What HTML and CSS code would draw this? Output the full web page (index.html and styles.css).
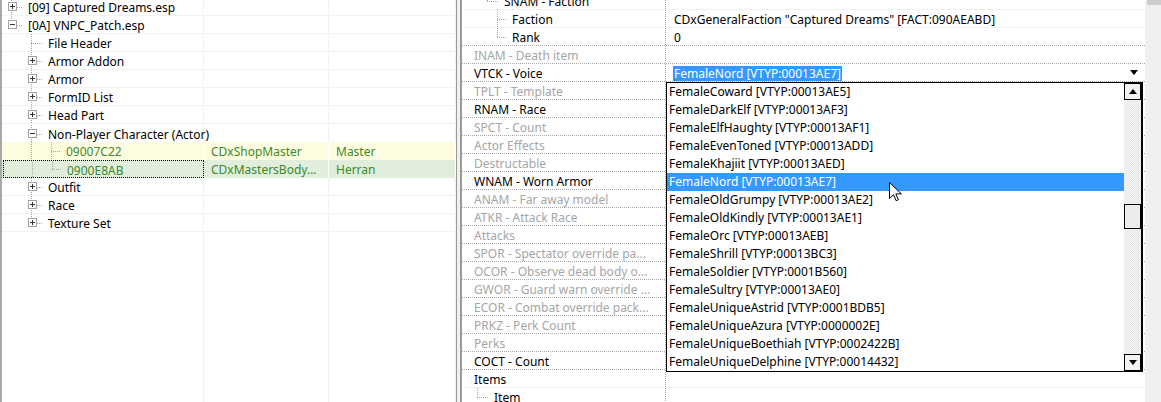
FILE: index.html
```html
<!DOCTYPE html>
<html lang="ja">
<head>
    <meta charset="UTF-8">
    <title>VNPC_Patch.esp</title>
    <link rel="stylesheet" href="styles.css">
</head>
<body>
<div class="app">
    <section class="tree-pane">
        <div class="tree">
            <div class="trow">
                <div class="c1"><span class="cn t"><svg class="box" width="9" height="9"><rect x=".5" y=".5" width="8" height="8" fill="#fff" stroke="#a3a3a3"/><path d="M2 4.5h5M4.5 2v5" stroke="#333"/></svg></span><span class="lbl">[09] Captured Dreams.esp</span></div>
                <div class="c2"></div><div class="c3"></div>
            </div>
            <div class="trow">
                <div class="c1"><span class="cn l"><svg class="box" width="9" height="9"><rect x=".5" y=".5" width="8" height="8" fill="#fff" stroke="#a3a3a3"/><path d="M2 4.5h5" stroke="#333"/></svg></span><span class="lbl">[0A] VNPC_Patch.esp</span></div>
                <div class="c2"></div><div class="c3"></div>
            </div>
            <div class="trow">
                <div class="c1"><span class="cn"></span><span class="cn t"></span><span class="lbl">File Header</span></div>
                <div class="c2"></div><div class="c3"></div>
            </div>
            <div class="trow">
                <div class="c1"><span class="cn"></span><span class="cn t"><svg class="box" width="9" height="9"><rect x=".5" y=".5" width="8" height="8" fill="#fff" stroke="#a3a3a3"/><path d="M2 4.5h5M4.5 2v5" stroke="#333"/></svg></span><span class="lbl">Armor Addon</span></div>
                <div class="c2"></div><div class="c3"></div>
            </div>
            <div class="trow">
                <div class="c1"><span class="cn"></span><span class="cn t"><svg class="box" width="9" height="9"><rect x=".5" y=".5" width="8" height="8" fill="#fff" stroke="#a3a3a3"/><path d="M2 4.5h5M4.5 2v5" stroke="#333"/></svg></span><span class="lbl">Armor</span></div>
                <div class="c2"></div><div class="c3"></div>
            </div>
            <div class="trow">
                <div class="c1"><span class="cn"></span><span class="cn t"><svg class="box" width="9" height="9"><rect x=".5" y=".5" width="8" height="8" fill="#fff" stroke="#a3a3a3"/><path d="M2 4.5h5M4.5 2v5" stroke="#333"/></svg></span><span class="lbl">FormID List</span></div>
                <div class="c2"></div><div class="c3"></div>
            </div>
            <div class="trow">
                <div class="c1"><span class="cn"></span><span class="cn t"><svg class="box" width="9" height="9"><rect x=".5" y=".5" width="8" height="8" fill="#fff" stroke="#a3a3a3"/><path d="M2 4.5h5M4.5 2v5" stroke="#333"/></svg></span><span class="lbl">Head Part</span></div>
                <div class="c2"></div><div class="c3"></div>
            </div>
            <div class="trow spill">
                <div class="c1"><span class="cn"></span><span class="cn t"><svg class="box" width="9" height="9"><rect x=".5" y=".5" width="8" height="8" fill="#fff" stroke="#a3a3a3"/><path d="M2 4.5h5" stroke="#333"/></svg></span><span class="lbl">Non-Player Character (Actor)</span></div>
                <div class="c2"></div><div class="c3"></div>
            </div>
            <div class="trow rec master">
                <div class="c1"><span class="cn"></span><span class="cn v"></span><span class="cn t short"></span><span class="lbl">09007C22</span></div>
                <div class="c2"><span class="lbl">CDxShopMaster</span></div><div class="c3"><span class="lbl">Master</span></div>
            </div>
            <div class="trow rec override">
                <div class="c1 focus"><span class="cn"></span><span class="cn v"></span><span class="cn l short"></span><span class="lbl">0900E8AB</span></div>
                <div class="c2"><span class="lbl">CDxMastersBody...</span></div><div class="c3"><span class="lbl">Herran</span></div>
            </div>
            <div class="trow">
                <div class="c1"><span class="cn"></span><span class="cn t"><svg class="box" width="9" height="9"><rect x=".5" y=".5" width="8" height="8" fill="#fff" stroke="#a3a3a3"/><path d="M2 4.5h5M4.5 2v5" stroke="#333"/></svg></span><span class="lbl">Outfit</span></div>
                <div class="c2"></div><div class="c3"></div>
            </div>
            <div class="trow">
                <div class="c1"><span class="cn"></span><span class="cn t"><svg class="box" width="9" height="9"><rect x=".5" y=".5" width="8" height="8" fill="#fff" stroke="#a3a3a3"/><path d="M2 4.5h5M4.5 2v5" stroke="#333"/></svg></span><span class="lbl">Race</span></div>
                <div class="c2"></div><div class="c3"></div>
            </div>
            <div class="trow">
                <div class="c1"><span class="cn"></span><span class="cn l"><svg class="box" width="9" height="9"><rect x=".5" y=".5" width="8" height="8" fill="#fff" stroke="#a3a3a3"/><path d="M2 4.5h5M4.5 2v5" stroke="#333"/></svg></span><span class="lbl">Texture Set</span></div>
                <div class="c2"></div><div class="c3"></div>
            </div>
            <div class="trow filler">
                <div class="c1"></div><div class="c2"></div><div class="c3"></div>
            </div>
        </div>
    </section>

    <div class="splitter"></div>

    <section class="props-pane">
        <div class="props">
            <div class="prow soft"><div class="pname"><span class="cn half"></span><span class="cn l"></span><span class="nm">SNAM - Faction</span></div><div class="pval"></div></div>
            <div class="prow soft"><div class="pname"><span class="cn half"></span><span class="cn half"></span><span class="cn t short"></span><span class="nm">Faction</span></div><div class="pval">CDxGeneralFaction "Captured Dreams" [FACT:090AEABD]</div></div>
            <div class="prow"><div class="pname"><span class="cn half"></span><span class="cn half"></span><span class="cn l short"></span><span class="nm">Rank</span></div><div class="pval">0</div></div>
            <div class="prow off"><div class="pname"><span class="nm">INAM - Death item</span></div><div class="pval"></div></div>
            <div class="prow"><div class="pname"><span class="nm">VTCK - Voice</span></div>
                <div class="pval combo"><span class="picked">FemaleNord [VTYP:00013AE7]</span><span class="arrow"></span></div>
            </div>
            <div class="prow off"><div class="pname"><span class="nm">TPLT - Template</span></div><div class="pval"></div></div>
            <div class="prow"><div class="pname"><span class="nm">RNAM - Race</span></div><div class="pval"></div></div>
            <div class="prow off"><div class="pname"><span class="nm">SPCT - Count</span></div><div class="pval"></div></div>
            <div class="prow off"><div class="pname"><span class="nm">Actor Effects</span></div><div class="pval"></div></div>
            <div class="prow off"><div class="pname"><span class="nm">Destructable</span></div><div class="pval"></div></div>
            <div class="prow"><div class="pname"><span class="nm">WNAM - Worn Armor</span></div><div class="pval"></div></div>
            <div class="prow off"><div class="pname"><span class="nm">ANAM - Far away model</span></div><div class="pval"></div></div>
            <div class="prow off"><div class="pname"><span class="nm">ATKR - Attack Race</span></div><div class="pval"></div></div>
            <div class="prow off"><div class="pname"><span class="nm">Attacks</span></div><div class="pval"></div></div>
            <div class="prow off"><div class="pname"><span class="nm">SPOR - Spectator override pa...</span></div><div class="pval"></div></div>
            <div class="prow off"><div class="pname"><span class="nm">OCOR - Observe dead body o...</span></div><div class="pval"></div></div>
            <div class="prow off"><div class="pname"><span class="nm">GWOR - Guard warn override ...</span></div><div class="pval"></div></div>
            <div class="prow off"><div class="pname"><span class="nm">ECOR - Combat override pack...</span></div><div class="pval"></div></div>
            <div class="prow off"><div class="pname"><span class="nm">PRKZ - Perk Count</span></div><div class="pval"></div></div>
            <div class="prow off"><div class="pname"><span class="nm">Perks</span></div><div class="pval"></div></div>
            <div class="prow"><div class="pname"><span class="nm">COCT - Count</span></div><div class="pval"></div></div>
            <div class="prow soft"><div class="pname"><span class="nm">Items</span></div><div class="pval"></div></div>
            <div class="prow soft"><div class="pname"><span class="cn l"></span><span class="nm">Item</span></div><div class="pval"></div></div>
        </div>
        <div class="pane-scroll"><div class="pane-thumb"></div></div>

        <div class="droplist">
            <ul class="items">
                <li>FemaleCoward [VTYP:00013AE5]</li>
                <li>FemaleDarkElf [VTYP:00013AF3]</li>
                <li>FemaleElfHaughty [VTYP:00013AF1]</li>
                <li>FemaleEvenToned [VTYP:00013ADD]</li>
                <li>FemaleKhajiit [VTYP:00013AED]</li>
                <li class="hot">FemaleNord [VTYP:00013AE7]</li>
                <li>FemaleOldGrumpy [VTYP:00013AE2]</li>
                <li>FemaleOldKindly [VTYP:00013AE1]</li>
                <li>FemaleOrc [VTYP:00013AEB]</li>
                <li>FemaleShrill [VTYP:00013BC3]</li>
                <li>FemaleSoldier [VTYP:0001B560]</li>
                <li>FemaleSultry [VTYP:00013AE0]</li>
                <li>FemaleUniqueAstrid [VTYP:0001BDB5]</li>
                <li>FemaleUniqueAzura [VTYP:0000002E]</li>
                <li>FemaleUniqueBoethiah [VTYP:0002422B]</li>
                <li>FemaleUniqueDelphine [VTYP:00014432]</li>
            </ul>
            <div class="vscroll">
                <div class="sbtn up"><span class="tri-up"></span></div>
                <div class="track t1"></div>
                <div class="thumb"></div>
                <div class="track t2"></div>
                <div class="sbtn down"><span class="tri-down"></span></div>
            </div>
        </div>

        <svg class="cursor" width="13" height="20" viewBox="0 0 13 20">
            <path d="M.5.5v16l4-3.8 2.6 6 2.3-1-2.6-5.8h5.6z" fill="#fff" stroke="#000" stroke-linejoin="round"/>
        </svg>
    </section>
</div>
</body>
</html>
```

FILE: styles.css
```css
* {
    box-sizing: border-box;
}

body {
    margin: 0;
    width: 1161px;
    height: 402px;
    overflow: hidden;
    background: #fff;
    font-family: "Noto Sans", "Noto Sans CJK JP", sans-serif;
    font-size: 12px;
    color: #000;
}

.app {
    display: flex;
    height: 402px;
}

/* left: record tree */

.tree-pane {
    width: 457px;
    height: 100%;
    border-left: 2px solid #a9a9a9;
    border-right: 1px solid #9a9a9a;
    overflow: hidden;
}

.tree {
    display: flex;
    flex-direction: column;
    height: calc(100% + 2px);
    margin-top: -2px;
}

.trow {
    display: grid;
    grid-template-columns: 202px 125px 1fr;
    height: 18px;
    line-height: 17px;
    white-space: nowrap;
}

.trow > div {
    display: flex;
    align-items: center;
    border-right: 1px solid #f2f2f2;
    border-bottom: 1px solid #f2f2f2;
    overflow: hidden;
}

.trow.spill .c1 {
    overflow: visible;
}

.trow .c2,
.trow .c3 {
    padding-left: 7px;
}

.trow .c2 .lbl,
.trow .c3 .lbl {
    padding-left: 0;
}

.trow.filler {
    flex: 1;
    height: auto;
}

.trow.filler > div {
    border-bottom: none;
}

.lbl {
    padding-left: 6px;
    padding-top: 2px;
}

.rec {
    color: #3d8a2c;
}

.rec.master {
    background: #fdfce0;
}

.rec.override {
    background: #e0eedb;
}

.rec > div {
    border-bottom-color: transparent;
    border-right-color: #fff;
}

.trow .c1.focus {
    border: 1px dotted #000;
    margin-left: 1px;
}

.focus .cn:first-child {
    width: 19px;
}

/* tree connector cells */

.cn {
    flex: none;
    display: inline-flex;
    align-items: center;
    justify-content: center;
    width: 20px;
    height: 18px;
}

.cn.v {
    background: repeating-linear-gradient(#a6a6a6 0 1px, transparent 1px 2px) 9px 0 / 1px 18px no-repeat;
}

.cn.t {
    background:
        repeating-linear-gradient(#a6a6a6 0 1px, transparent 1px 2px) 9px 0 / 1px 18px no-repeat,
        repeating-linear-gradient(90deg, #a6a6a6 0 1px, transparent 1px 2px) 9px 9px / 11px 1px no-repeat;
}

.cn.l {
    background:
        repeating-linear-gradient(#a6a6a6 0 1px, transparent 1px 2px) 9px 0 / 1px 9px no-repeat,
        repeating-linear-gradient(90deg, #a6a6a6 0 1px, transparent 1px 2px) 9px 9px / 11px 1px no-repeat;
}

.cn.short {
    width: 18px;
}

.cn.half {
    width: 10px;
}

.box {
    display: block;
}

/* splitter */

.splitter {
    width: 3px;
    background: #f0f0f0;
}

/* right: record properties */

.props-pane {
    position: relative;
    flex: 1;
    height: 100%;
    border-left: 2px solid #9a9a9a;
    display: flex;
    overflow: hidden;
}

.props {
    display: flex;
    flex-direction: column;
    margin-top: -8px;
    width: 683px;
}

.prow {
    display: grid;
    grid-template-columns: 204px 1fr;
    height: 18px;
    line-height: 17px;
    white-space: nowrap;
    border-bottom: 1px dotted #a8a8a8;
}

.prow.soft {
    border-bottom: 1px solid #f0f0f0;
}

.prow.off .pname {
    color: #a6a6a6;
}

.pname {
    display: flex;
    align-items: center;
    padding-left: 12px;
    border-right: 1px dotted #a8a8a8;
    overflow: hidden;
}

.nm {
    padding-top: 2px;
}

.pname .cn.l,
.pname .cn.t {
    margin-right: 6px;
    margin-left: -6px;
}

.pval {
    padding-left: 8px;
    padding-top: 1px;
    overflow: hidden;
}

.pval.combo {
    display: flex;
    align-items: center;
    justify-content: space-between;
    padding-left: 7px;
    padding-right: 7px;
    padding-top: 2px;
}

.picked {
    background: #3399ff;
    color: #fff;
    line-height: 15px;
    padding: 0 1px;
}

.arrow {
    width: 0;
    height: 0;
    margin-top: -2px;
    border-left: 4px solid transparent;
    border-right: 4px solid transparent;
    border-top: 5px solid #000;
}

.pane-scroll {
    flex: 1;
    background: #f0f0f0;
}

.pane-thumb {
    height: 5px;
    margin-left: 2px;
    background: #cdcdcd;
}

/* voice dropdown list */

.droplist {
    position: absolute;
    left: 204px;
    top: 82px;
    width: 477px;
    height: 290px;
    display: flex;
    border: 1px solid #000;
    border-right-width: 2px;
    background: #fff;
}

.items {
    flex: 1;
    margin: 0;
    padding: 0;
    list-style: none;
}

.items li {
    height: 18px;
    line-height: 18px;
    padding-left: 2px;
    white-space: nowrap;
}

.items li.hot {
    background: #3399ff;
    color: #fff;
}

.vscroll {
    width: 17px;
    display: flex;
    flex-direction: column;
}

.sbtn {
    height: 17px;
    display: flex;
    align-items: center;
    justify-content: center;
    background: #f2f2f2;
    border: 1px solid #000;
}

.tri-up,
.tri-down {
    width: 0;
    height: 0;
    border-left: 4px solid transparent;
    border-right: 4px solid transparent;
}

.tri-up {
    border-bottom: 5px solid #000;
}

.tri-down {
    border-top: 5px solid #000;
}

.track {
    background: repeating-conic-gradient(#e2e2e2 0 25%, #fbfbfb 0 50%) 0 0 / 2px 2px;
}

.t1 {
    height: 104px;
}

.t2 {
    flex: 1;
}

.thumb {
    height: 25px;
    background: #ececec;
    border: 1px solid #000;
}

.cursor {
    position: absolute;
    left: 427px;
    top: 182px;
}
```
